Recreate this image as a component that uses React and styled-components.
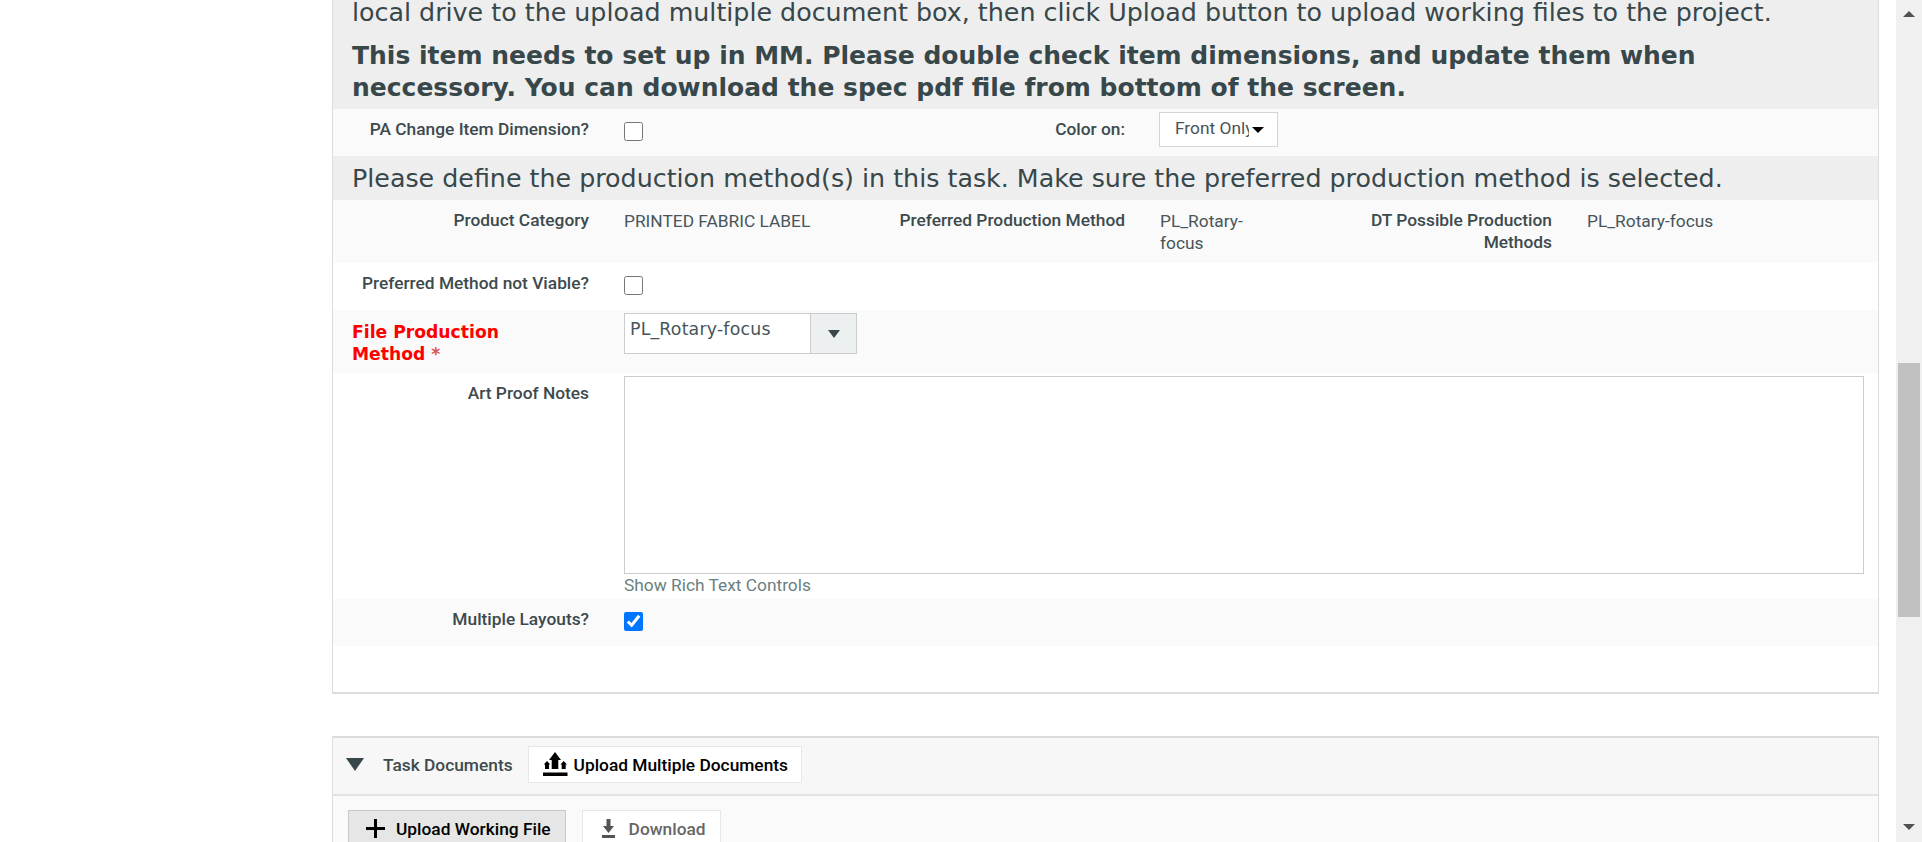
import React from 'react';
import styled, { createGlobalStyle } from 'styled-components';

const GlobalStyle = createGlobalStyle`
  html, body {
    margin: 0;
    height: 100%;
    overflow: hidden;
    background: #fff;
  }
  body {
    font-family: Roboto, "Liberation Sans", sans-serif;
    color: #37474a;
  }
`;

const Page = styled.div`
  display: flex;
  height: 842px;
  overflow: hidden;
`;

const Main = styled.main`
  flex: 1;
  min-width: 0;
  padding: 0 17px 0 332px;
`;

const Panel = styled.section`
  height: 694px;
  box-sizing: border-box;
  border: 1px solid #dcdcdc;
  border-top: 0;
  border-bottom-width: 2px;
  background: #fff;
`;

const Banner = styled.div`
  background: #eeeeee;
  padding: ${props => props.$padding || '0 30px 0 19px'};
  font-family: "DejaVu Sans", Verdana, sans-serif;
  font-size: 25.33px;
  color: #37474a;
  overflow: hidden;
`;

const BannerText = styled.p`
  margin: ${props => props.$margin || '0'};
  line-height: 32px;
  font-size: ${props => (props.$bold ? '25px' : 'inherit')};
  font-weight: ${props => (props.$bold ? 700 : 400)};
`;

const FieldRow = styled.div`
  display: grid;
  grid-template-columns: 256px 221px 245px 119px 238px 1fr;
  column-gap: 35px;
  align-items: start;
  box-sizing: border-box;
  height: ${props => props.$height}px;
  padding-top: 10px;
  background: ${props => (props.$shaded ? '#fafafa' : '#fff')};
`;

const Label = styled.label`
  justify-self: end;
  margin-top: -1px;
  text-align: right;
  font-size: 17.33px;
  font-weight: 500;
  line-height: 22px;
  color: #3d4a4d;
`;

const NarrowLabel = styled(Label)`
  max-width: 200px;
`;

const RequiredLabel = styled.label`
  padding-left: 19px;
  font-family: "DejaVu Sans", Verdana, sans-serif;
  font-size: 17.2px;
  font-weight: 700;
  line-height: 22px;
  color: #ff0000;
  width: 170px;
  margin-top: 1px;
`;

const Star = styled.span`
  color: #e05050;
`;

const Value = styled.span`
  font-size: 17.33px;
  line-height: 22px;
  color: #47555a;
`;

const Check = styled.input.attrs({ type: 'checkbox' })`
  width: 19px;
  height: 19px;
  margin: 3px 0 0;
`;

const MiniSelect = styled.div`
  display: flex;
  align-items: center;
  gap: 3px;
  box-sizing: border-box;
  width: 119px;
  height: 35px;
  margin: -7px 0 0 -1px;
  padding: 0 13px 0 15px;
  background: #fff;
  border: 1px solid #d4d4d4;
  font-size: 17.33px;
  color: #4a5356;
`;

const MiniSelectText = styled.span`
  flex: 1;
  overflow: hidden;
  white-space: nowrap;
  margin-top: -4px;
`;

const Combo = styled.div`
  display: flex;
  box-sizing: border-box;
  width: 233px;
  height: 41px;
  margin-top: -7px;
  border: 1px solid #cccccc;
  background: #fff;
  font-family: "DejaVu Sans", Verdana, sans-serif;
  font-size: 17.33px;
  letter-spacing: 0.2px;
  color: #47555a;
`;

const ComboText = styled.span`
  flex: 1;
  padding: 5px 0 0 5px;
`;

const ComboButton = styled.span`
  display: flex;
  align-items: center;
  justify-content: center;
  width: 45px;
  background: #ecf0f1;
  border-left: 1px solid #cccccc;
`;

const NotesCell = styled.div`
  grid-column: 2 / -1;
  padding-right: 14px;
  margin-top: -7px;
`;

const Notes = styled.textarea`
  display: block;
  box-sizing: border-box;
  width: 100%;
  height: 198px;
  border: 1px solid #cccccc;
  background: #fff;
  resize: none;
  outline: 0;
`;

const RichTextLink = styled.a`
  display: block;
  font-size: 17.33px;
  line-height: 22px;
  color: #6b7f80;
`;

const DocsPanel = styled.section`
  margin-top: 42px;
  height: 200px;
  box-sizing: border-box;
  border: 1px solid #dcdcdc;
  border-width: 2px 1px 0;
  background: #fafafa;
`;

const DocsHeader = styled.header`
  display: flex;
  align-items: center;
  box-sizing: border-box;
  height: 58px;
  padding: 0 0 3px 13px;
  background: #f7f7f7;
  border-bottom: 2px solid #e3e3e3;
`;

const DocsTitle = styled.h3`
  margin: 0 15px 0 19px;
  font-size: 17.33px;
  font-weight: 500;
  color: #3d4a4d;
`;

const DocsToolbar = styled.div`
  display: flex;
  gap: 16px;
  padding: 14px 0 0 15px;
`;

const Button = styled.button`
  display: inline-flex;
  align-items: center;
  box-sizing: border-box;
  height: 37px;
  gap: ${props => props.$gap || 12}px;
  padding: ${props => props.$padding || '0 14px'};
  font-family: inherit;
  font-size: 17.33px;
  font-weight: 500;
  background: ${props => props.$bg || '#fff'};
  color: ${props => props.$color || '#000'};
  border: ${props => props.$border || '1px solid #e8e8e8'};
`;

const Scrollbar = styled.aside`
  display: flex;
  flex-direction: column;
  align-items: center;
  flex: none;
  width: 26px;
  height: 842px;
  background: #f0f0f0;
`;

const ScrollArrow = styled.span`
  flex: none;
  width: 0;
  height: 0;
  border-left: 6px solid transparent;
  border-right: 6px solid transparent;
  margin: ${props => props.$margin};
  ${props => (props.$down
    ? 'border-top: 6px solid #505050;'
    : 'border-bottom: 6px solid #505050;')}
`;

const ScrollThumb = styled.div`
  width: 22px;
  height: 254px;
  margin-top: 346px;
  background: #c1c1c1;
`;

const Triangle = styled.span`
  display: block;
  flex: none;
  width: 0;
  height: 0;
  border-left: ${props => props.$size}px solid transparent;
  border-right: ${props => props.$size}px solid transparent;
  border-top: ${props => props.$depth}px solid ${props => props.$color || '#37474a'};
`;

function UploadManyIcon() {
  return (
    <svg width="25" height="25" viewBox="0 0 25 25" fill="#000">
      <path d="M12 0l6 8h-2.700v9H8.700V8H6z" />
      <path d="M4 9l3.300 3.500H6V17H2v-4.500H.700z" />
      <path d="M20.700 9l3.300 3.500h-1.300V17h-4v-4.500h-1.300z" />
      <rect x="0" y="20.500" width="24.500" height="3.500" />
    </svg>
  );
}

function PlusIcon() {
  return (
    <svg width="19" height="19" viewBox="0 0 19 19" fill="#000">
      <rect x="0" y="8" width="19" height="3" />
      <rect x="8" y="0" width="3" height="19" />
    </svg>
  );
}

function DownloadIcon() {
  return (
    <svg width="13" height="19" viewBox="0 0 13 19" fill="#555">
      <path d="M4.500 0h4v7H12l-5.500 7L1 7h3.500z" />
      <rect x="0" y="16" width="13" height="3" />
    </svg>
  );
}

export default function App() {
  return (
    <>
      <GlobalStyle />
      <Page>
        <Main>
          <Panel>
            <Banner>
              <BannerText $margin="-4px 0 12px">
                local drive to the upload multiple document box, then click Upload button to upload working files to the project.
              </BannerText>
              <BannerText $bold $margin="0 0 5px">
                This item needs to set up in MM. Please double check item dimensions, and update them when neccessory. You can download the spec pdf file from bottom of the screen.
              </BannerText>
            </Banner>
            <FieldRow $height={47} $shaded>
              <Label>PA Change Item Dimension?</Label>
              <Check />
              <Label>Color on:</Label>
              <MiniSelect>
                <MiniSelectText>Front Only</MiniSelectText>
                <Triangle $size={6} $depth={6} $color="#000" />
              </MiniSelect>
            </FieldRow>
            <Banner $padding="6px 30px 6px 19px">
              <BannerText>
                Please define the production method(s) in this task. Make sure the preferred production method is selected.
              </BannerText>
            </Banner>
            <FieldRow $height={63} $shaded>
              <Label>Product Category</Label>
              <Value>PRINTED FABRIC LABEL</Value>
              <Label>Preferred Production Method</Label>
              <Value>PL_Rotary-focus</Value>
              <NarrowLabel>DT Possible Production Methods</NarrowLabel>
              <Value>PL_Rotary-focus</Value>
            </FieldRow>
            <FieldRow $height={47}>
              <Label>Preferred Method not Viable?</Label>
              <Check />
            </FieldRow>
            <FieldRow $height={63} $shaded>
              <RequiredLabel>File Production Method <Star>*</Star></RequiredLabel>
              <Combo>
                <ComboText>PL_Rotary-focus</ComboText>
                <ComboButton><Triangle $size={6} $depth={8} /></ComboButton>
              </Combo>
            </FieldRow>
            <FieldRow $height={226}>
              <Label>Art Proof Notes</Label>
              <NotesCell>
                <Notes />
                <RichTextLink>Show Rich Text Controls</RichTextLink>
              </NotesCell>
            </FieldRow>
            <FieldRow $height={47} $shaded>
              <Label>Multiple Layouts?</Label>
              <Check defaultChecked />
            </FieldRow>
          </Panel>
          <DocsPanel>
            <DocsHeader>
              <Triangle $size={9} $depth={13} />
              <DocsTitle>Task Documents</DocsTitle>
              <Button $gap={6} $padding="0 13px 0 14px">
                <UploadManyIcon />
                Upload Multiple Documents
              </Button>
            </DocsHeader>
            <DocsToolbar>
              <Button $padding="0 14px 0 17px" $gap={11} $bg="#e6e6e6" $border="1px solid #c8c8c8">
                <PlusIcon />
                Upload Working File
              </Button>
              <Button $padding="0 14px 0 19px" $color="#666" $gap={14}>
                <DownloadIcon />
                Download
              </Button>
            </DocsToolbar>
          </DocsPanel>
        </Main>
        <Scrollbar>
          <ScrollArrow $margin="11px 0 0" />
          <ScrollThumb />
          <ScrollArrow $down $margin="207px 0 0" />
        </Scrollbar>
      </Page>
    </>
  );
}
